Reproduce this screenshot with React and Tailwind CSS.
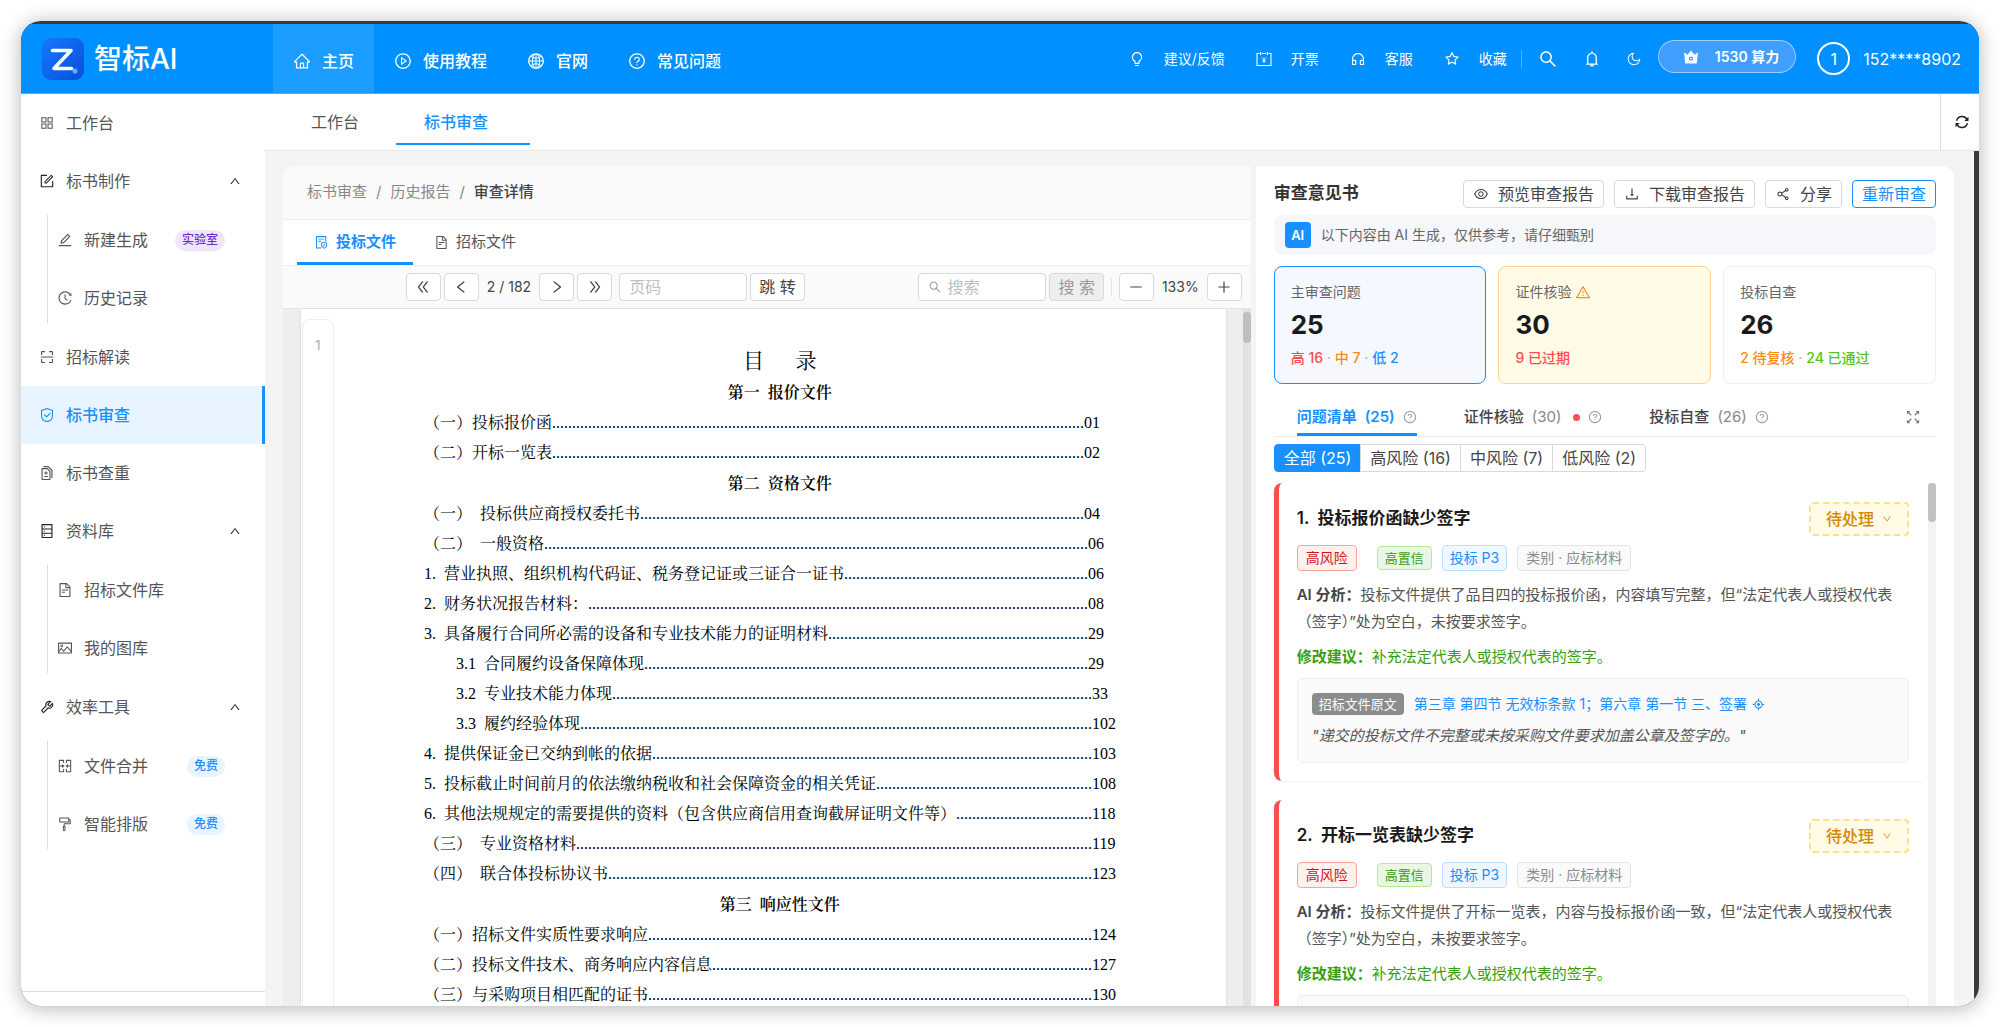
import React, { useState } from 'react';
import {
  AiOutlineAim,
  AiOutlineAppstore,
  AiOutlineBell,
  AiOutlineBulb,
  AiOutlineCustomerService,
  AiOutlineDatabase,
  AiOutlineDiff,
  AiOutlineDoubleLeft,
  AiOutlineDoubleRight,
  AiOutlineDown,
  AiOutlineDownload,
  AiOutlineEdit,
  AiOutlineEye,
  AiOutlineFileProtect,
  AiOutlineFileText,
  AiOutlineForm,
  AiOutlineFormatPainter,
  AiOutlineGlobal,
  AiOutlineHistory,
  AiOutlineHome,
  AiOutlineLeft,
  AiOutlineMergeCells,
  AiOutlineMinus,
  AiOutlineMoon,
  AiOutlinePicture,
  AiOutlinePlayCircle,
  AiOutlinePlus,
  AiOutlineQuestionCircle,
  AiOutlineRight,
  AiOutlineSafety,
  AiOutlineScan,
  AiOutlineSearch,
  AiOutlineShareAlt,
  AiOutlineStar,
  AiOutlineTool,
  AiOutlineUp,
  AiOutlineWarning,
} from 'react-icons/ai';

const InvoiceIcon = ({ className }) => (
  <svg viewBox="0 0 16 16" className={className} fill="none" stroke="currentColor" strokeWidth="1.1">
    <path d="M3.5 2.5H1v12h14v-12h-2.5M5.8 2.5h4.4M4.6 1v3M11.4 1v3" />
    <path d="M6.2 6.2L8 8.8l1.8-2.6M8 8.8v3M6.6 9h2.8M6.6 10.5h2.8" strokeWidth="0.9" />
  </svg>
);

const CrownIcon = ({ className }) => (
  <svg viewBox="0 0 16 16" className={className} fill="currentColor" fillRule="evenodd">
    <path d="M1 3.5l3.6 2.2L8 1.5l3.4 4.2L15 3.5 13.7 14.5H2.3zM8 7.4a2.2 2.2 0 100 4.4 2.2 2.2 0 000-4.4zm0 1.3a.9.9 0 110 1.8.9.9 0 010-1.8z" />
  </svg>
);

const RefreshIcon = ({ className }) => (
  <svg viewBox="0 0 16 16" className={className} fill="none" stroke="currentColor" strokeWidth="1.6">
    <path d="M1.8 6.6A6.4 6.4 0 0113.6 5M14.2 9.4A6.4 6.4 0 012.4 11" />
    <path d="M15.4 2v4.8h-4.8zM.6 14V9.2h4.8z" fill="currentColor" stroke="none" />
  </svg>
);

const ExpandIcon = ({ className }) => (
  <svg viewBox="0 0 16 16" className={className} fill="none" stroke="currentColor" strokeWidth="1.3">
    <path d="M2 2l4 4M14 2l-4 4M2 14l4-4M14 14l-4-4" />
    <path d="M1 5V1h4zM11 1h4v4zM1 11v4h4zM11 15h4v-4z" fill="currentColor" stroke="none" />
  </svg>
);

const LogoMark = () => (
  <svg viewBox="0 0 42 42" className="w-[42px] h-[42px]">
    <defs>
      <linearGradient id="logo" x1="0" y1="0" x2="1" y2="1">
        <stop offset="0" stopColor="#1677ff" />
        <stop offset="1" stopColor="#0a4fd8" />
      </linearGradient>
    </defs>
    <rect width="42" height="42" rx="9" fill="url(#logo)" />
    <path d="M10.5 12.5H29L12 30.5h17.5" fill="none" stroke="#fff" strokeWidth="3.6" strokeLinecap="round" strokeLinejoin="round" />
    <circle cx="33" cy="33" r="2.5" fill="#5eb0ff" />
  </svg>
);

const mainNav = [
  { label: '主页', icon: AiOutlineHome, active: true },
  { label: '使用教程', icon: AiOutlinePlayCircle },
  { label: '官网', icon: AiOutlineGlobal },
  { label: '常见问题', icon: AiOutlineQuestionCircle },
];

const quickLinks = [
  { label: '建议/反馈', icon: AiOutlineBulb },
  { label: '开票', icon: InvoiceIcon },
  { label: '客服', icon: AiOutlineCustomerService },
  { label: '收藏', icon: AiOutlineStar },
];

const menu = [
  { label: '工作台', icon: AiOutlineAppstore },
  {
    label: '标书制作',
    icon: AiOutlineForm,
    children: [
      { label: '新建生成', icon: AiOutlineEdit, badge: '实验室', badgeClass: 'bg-[#efe6fb] text-[#722ed1]' },
      { label: '历史记录', icon: AiOutlineHistory },
    ],
  },
  { label: '招标解读', icon: AiOutlineScan },
  { label: '标书审查', icon: AiOutlineSafety, active: true },
  { label: '标书查重', icon: AiOutlineDiff },
  {
    label: '资料库',
    icon: AiOutlineDatabase,
    children: [
      { label: '招标文件库', icon: AiOutlineFileText },
      { label: '我的图库', icon: AiOutlinePicture },
    ],
  },
  {
    label: '效率工具',
    icon: AiOutlineTool,
    children: [
      { label: '文件合并', icon: AiOutlineMergeCells, badge: '免费', badgeClass: 'bg-[#e8f4ff] text-[#1890ff]' },
      { label: '智能排版', icon: AiOutlineFormatPainter, badge: '免费', badgeClass: 'bg-[#e8f4ff] text-[#1890ff]' },
    ],
  },
];

// Table of contents of the open bid document, dots = length of the leader
const toc = [
  { heading: '第一  报价文件' },
  { text: '（一）投标报价函', dots: 133, page: '01' },
  { text: '（二）开标一览表', dots: 133, page: '02' },
  { heading: '第二  资格文件' },
  { text: '（一）  投标供应商授权委托书', dots: 111, page: '04' },
  { text: '（二）  一般资格', dots: 136, page: '06' },
  { text: '1.  营业执照、组织机构代码证、税务登记证或三证合一证书', dots: 61, page: '06' },
  { text: '2.  财务状况报告材料：', dots: 125, page: '08' },
  { text: '3.  具备履行合同所必需的设备和专业技术能力的证明材料', dots: 65, page: '29' },
  { text: '3.1  合同履约设备保障体现', dots: 111, page: '29', nested: true },
  { text: '3.2  专业技术能力体现', dots: 120, page: '33', nested: true },
  { text: '3.3  履约经验体现', dots: 128, page: '102', nested: true },
  { text: '4.  提供保证金已交纳到帐的依据', dots: 110, page: '103' },
  { text: '5.  投标截止时间前月的依法缴纳税收和社会保障资金的相关凭证', dots: 54, page: '108' },
  { text: '6.  其他法规规定的需要提供的资料（包含供应商信用查询截屏证明文件等）', dots: 34, page: '118' },
  { text: '（三）  专业资格材料', dots: 129, page: '119' },
  { text: '（四）  联合体投标协议书', dots: 121, page: '123' },
  { heading: '第三  响应性文件' },
  { text: '（一）招标文件实质性要求响应', dots: 111, page: '124' },
  { text: '（二）投标文件技术、商务响应内容信息', dots: 95, page: '127' },
  { text: '（三）与采购项目相匹配的证书', dots: 111, page: '130' },
];

const filters = ['全部 (25)', '高风险 (16)', '中风险 (7)', '低风险 (2)'];

const issues = [
  {
    id: 1,
    title: '投标报价函缺少签字',
    analysis: '投标文件提供了品目四的投标报价函，内容填写完整，但“法定代表人或授权代表（签字）”处为空白，未按要求签字。',
  },
  {
    id: 2,
    title: '开标一览表缺少签字',
    analysis: '投标文件提供了开标一览表，内容与投标报价函一致，但“法定代表人或授权代表（签字）”处为空白，未按要求签字。',
  },
];

const Header = () => (
  <header className="h-[70px] shrink-0 bg-[#0090ff] border-b border-[#47afff] flex text-white">
    <div className="w-[252px] pl-[21px] flex items-center gap-2.5 shrink-0">
      <LogoMark />
      <span className="text-[28px] font-medium leading-8">智标AI</span>
    </div>
    <nav className="flex">
      {mainNav.map(({ label, icon: Icon, active }) => (
        <a
          key={label}
          href="#"
          className={`flex items-center gap-[11px] px-5 pt-1 text-base font-medium whitespace-nowrap ${active ? 'bg-[#1a9dff]' : ''}`}
        >
          <Icon className="w-[18px] h-[18px]" />
          {label}
        </a>
      ))}
    </nav>
    <div className="ml-auto pr-[18px] flex items-center">
      <div className="flex items-center gap-[31px] pr-3.5 mr-4 border-r border-white/30 h-[18px]">
        {quickLinks.map(({ label, icon: Icon }) => (
          <a key={label} href="#" className="flex items-center gap-[19px] text-sm whitespace-nowrap">
            <Icon className="w-4 h-4" />
            {label}
          </a>
        ))}
      </div>
      <div className="flex items-center gap-[25px]">
        <button aria-label="搜索"><AiOutlineSearch className="w-5 h-5" /></button>
        <button aria-label="通知"><AiOutlineBell className="w-[18px] h-[18px]" /></button>
        <button aria-label="深色模式"><AiOutlineMoon className="w-4 h-4" /></button>
      </div>
      <button className="ml-4 mb-1 h-[33px] pl-6 pr-4 rounded-full border border-white/50 bg-[#409eff] flex items-center gap-4 text-sm font-semibold whitespace-nowrap">
        <CrownIcon className="w-4 h-4" />
        1530 算力
      </button>
      <a href="#" className="ml-[21px] flex items-center gap-[13px] text-base">
        <span className="w-[33px] h-[33px] rounded-full border-2 border-white flex items-center justify-center">1</span>
        152****8902
      </a>
    </div>
  </header>
);

const MenuItem = ({ item, nested }) => {
  const Icon = item.icon;
  return (
    <a
      href="#"
      className={`h-[58px] pr-6 flex items-center text-base ${nested ? 'pl-9' : 'pl-[18px]'} ${
        item.active ? 'bg-[#e8f4ff] text-[#1890ff] font-medium border-r-3 border-[#1890ff]' : 'text-[#555]'
      }`}
    >
      <Icon className={`w-4 h-4 mr-[11px] ${item.children ? 'text-[#222]' : ''}`} />
      {item.label}
      {item.badge && (
        <span className={`ml-auto mr-4 h-[21px] px-[7px] rounded-full text-xs font-medium flex items-center ${item.badgeClass}`}>
          {item.badge}
        </span>
      )}
      {item.children && <AiOutlineUp className="w-3 h-3 ml-auto text-[#222]" />}
    </a>
  );
};

const Sidebar = () => (
  <aside className="w-[244px] shrink-0 bg-white flex flex-col justify-between overflow-hidden">
    <nav>
      {menu.map((item) => (
        <div key={item.label}>
          <MenuItem item={item} />
          {item.children && (
            <div className="py-px relative before:absolute before:left-[26px] before:top-[5px] before:bottom-[5px] before:w-px before:bg-[#ddd]">
              {item.children.map((child) => (
                <MenuItem key={child.label} item={child} nested />
              ))}
            </div>
          )}
        </div>
      ))}
    </nav>
    <div className="h-[15px] border-t border-[#ddd] shrink-0" />
  </aside>
);

const ToolButton = ({ label, children }) => (
  <button
    aria-label={label}
    className="w-[35px] h-7 rounded border border-[#d9d9d9] bg-white flex items-center justify-center text-[#444] shrink-0"
  >
    {children}
  </button>
);

const DocumentPanel = () => (
  <section className="min-w-0 bg-white rounded-tl-xl overflow-hidden flex flex-col">
    <div className="h-[54px] shrink-0 px-6 bg-[#fafafa] border-b border-[#eee] flex items-center gap-[9px] text-[15px] text-[#888]">
      <a href="#">标书审查</a>
      <span>/</span>
      <a href="#">历史报告</a>
      <span>/</span>
      <span className="text-[#444] font-medium">审查详情</span>
    </div>
    <div className="h-[46px] shrink-0 px-3.5 flex gap-1 border-b border-[#eee] text-[15px]">
      <button className="px-[17px] pt-[3px] flex items-center gap-[7px] text-[#1890ff] font-semibold border-b-3 border-[#1890ff]">
        <AiOutlineFileProtect />
        投标文件
      </button>
      <button className="px-[17px] pt-[3px] flex items-center gap-[7px] text-[#555] border-b-3 border-transparent">
        <AiOutlineFileText />
        招标文件
      </button>
    </div>
    <div className="h-[43px] shrink-0 px-[9px] bg-[#fafafa] border-b border-[#e4e4e4] flex items-center text-[#444]">
      <div className="flex-1 flex items-center justify-center gap-[3px] text-sm">
        <ToolButton label="第一页"><AiOutlineDoubleLeft className="w-4 h-4" /></ToolButton>
        <ToolButton label="上一页"><AiOutlineLeft className="w-4 h-4" /></ToolButton>
        <span className="px-[5px] whitespace-nowrap">2 / 182</span>
        <ToolButton label="下一页"><AiOutlineRight className="w-4 h-4" /></ToolButton>
        <ToolButton label="最后一页"><AiOutlineDoubleRight className="w-4 h-4" /></ToolButton>
        <input
          aria-label="页码"
          placeholder="页码"
          className="w-32 h-7 ml-1 px-[9px] rounded border border-[#d9d9d9] bg-white text-base placeholder:text-[#bfbfbf]"
        />
        <button className="h-7 px-2 rounded border border-[#d9d9d9] bg-white text-base whitespace-nowrap">跳 转</button>
      </div>
      <div className="flex items-center gap-[3px]">
        <label className="w-32 h-7 px-[9px] rounded border border-[#d9d9d9] bg-white flex items-center gap-[5px]">
          <AiOutlineSearch className="w-3.5 h-3.5 text-[#999] shrink-0" />
          <input aria-label="搜索内容" placeholder="搜索" className="w-full text-base placeholder:text-[#bfbfbf] outline-none" />
        </label>
        <button disabled className="h-7 px-2 rounded border border-[#d9d9d9] bg-[#eee] text-base text-[#999] whitespace-nowrap">搜 索</button>
      </div>
      <div className="ml-[7px] h-[18px] border-l border-[#e4e4e4] pl-[7px] flex items-center gap-2 text-sm">
        <ToolButton label="缩小"><AiOutlineMinus className="w-4 h-4" /></ToolButton>
        133%
        <ToolButton label="放大"><AiOutlinePlus className="w-4 h-4" /></ToolButton>
      </div>
    </div>
    <div className="flex-1 min-h-0 flex bg-[#eee]">
      <div className="flex-1 min-w-0 ml-[18px] mr-[17px] bg-white shadow flex overflow-hidden">
        <div className="w-8 shrink-0 ml-px mt-2.5 pt-[15px] rounded-t-lg border border-b-0 border-[#eee] text-center text-[13px] leading-5 text-[#aaa]">
          1
        </div>
        <div className="flex-1 min-w-0 px-22 pt-9 font-['Liberation_Serif','Noto_Serif_CJK_SC','Noto_Sans_CJK_SC',serif] text-base text-black">
          <h2 className="h-8 text-center text-[21px] leading-8 whitespace-pre">目      录</h2>
          {toc.map((row) =>
            row.heading ? (
              <h3 key={row.heading} className="h-[31px] text-center leading-[31px] font-semibold whitespace-pre">{row.heading}</h3>
            ) : (
              <p key={row.text} className={`h-[30px] leading-[30px] whitespace-pre ${row.nested ? 'pl-[34px]' : 'pl-0.5'}`}>
                {row.text}{'.'.repeat(row.dots)}{row.page}
              </p>
            )
          )}
        </div>
      </div>
      <div className="w-2 shrink-0 pt-[3px] bg-[#e2e2e2]">
        <div className="h-[31px] rounded-sm bg-[#bfbfbf]" />
      </div>
    </div>
  </section>
);

const ActionButton = ({ icon: Icon, children }) => (
  <button className="h-7 px-[9px] rounded border border-[#d9d9d9] bg-white flex items-center gap-[9px] text-base text-[#444] whitespace-nowrap">
    <Icon className="w-4 h-4" />
    {children}
  </button>
);

const SummaryCard = ({ label, count, className, icon, children }) => (
  <div className={`px-4 py-3.5 rounded-lg border text-sm ${className}`}>
    <div className="leading-[22px] text-[#666] flex items-center gap-1">
      {label}
      {icon}
    </div>
    <div className="mt-1 text-[26px] leading-9 font-bold text-[#1a1a1a]">{count}</div>
    <div className="mt-1 leading-[22px] font-medium whitespace-nowrap">{children}</div>
  </div>
);

const Dot = () => <span className="text-[#bbb]"> · </span>;

const IssueCard = ({ issue }) => (
  <article className="pl-[18px] pr-[18px] pt-[19px] pb-[18px] rounded-lg border-l-5 border-[#ff4d4f] bg-white shadow-[0_1px_2px_rgba(0,0,0,0.05)]">
    <div className="h-[34px] flex items-center justify-between">
      <h3 className="text-[17px] font-semibold text-[#1a1a1a] whitespace-pre">{issue.id}.  {issue.title}</h3>
      <button className="h-[34px] px-[15px] rounded border-2 border-dashed border-[#ffe08a] bg-[#fffbe6] text-[#d48806] text-base font-medium flex items-center gap-2">
        待处理
        <AiOutlineDown className="w-2.5 h-2.5" />
      </button>
    </div>
    <div className="mt-[9px] h-[26px] flex items-center text-sm whitespace-nowrap">
      <span className="h-[26px] px-2 mr-5 rounded border border-[#ffa39e] bg-[#fff1f0] text-[#cf1322] flex items-center">高风险</span>
      <span className="h-6 px-[7px] mr-2.5 rounded border border-[#b7eb8f] bg-[#eaf7e4] text-[#389e0d] text-[13px] flex items-center">高置信</span>
      <a href="#" className="h-[26px] px-[7px] mr-2.5 rounded border border-[#bfdfff] bg-[#f0f7ff] text-[#1890ff] flex items-center">投标 P3</a>
      <span className="h-[26px] px-2 rounded border border-[#e4e4e4] bg-[#fafafa] text-[#8c8c8c] flex items-center">类别 · 应标材料</span>
    </div>
    <p className="mt-2.5 text-[15px] leading-[27px] text-[#555]">
      <b className="font-semibold text-[#444]">AI 分析：</b>
      {issue.analysis}
    </p>
    <p className="mt-2 text-[15px] leading-[27px] text-[#389e0d]">
      <b className="font-semibold">修改建议：</b>
      补充法定代表人或授权代表的签字。
    </p>
    <div className="mt-2 px-3.5 py-[13px] rounded-md border border-[#eee] bg-[#fafafa]">
      <div className="h-6 flex items-center text-sm whitespace-nowrap">
        <span className="h-[22px] px-[7px] mr-2.5 rounded-sm bg-[#8c8c8c] text-white text-[13px] flex items-center">招标文件原文</span>
        <a href="#" className="text-[#1890ff] flex items-center gap-[5px]">
          第三章 第四节 无效标条款 1；第六章 第一节 三、签署
          <AiOutlineAim className="w-[13px] h-[13px]" />
        </a>
      </div>
      <blockquote className="mt-1.5 text-[15px] leading-[27px] italic text-[#555]">
        "递交的投标文件不完整或未按采购文件要求加盖公章及签字的。"
      </blockquote>
    </div>
  </article>
);

const ReviewPanel = () => {
  const [filter, setFilter] = useState(filters[0]);

  return (
    <section className="min-w-0 px-[18px] pt-3.5 bg-white rounded-tr-xl flex flex-col overflow-hidden">
      <div className="h-7 shrink-0 flex items-center gap-2.5">
        <h2 className="mr-auto text-[17px] font-semibold text-[#333] whitespace-nowrap">审查意见书</h2>
        <ActionButton icon={AiOutlineEye}>预览审查报告</ActionButton>
        <ActionButton icon={AiOutlineDownload}>下载审查报告</ActionButton>
        <ActionButton icon={AiOutlineShareAlt}>分享</ActionButton>
        <button className="h-7 px-[9px] rounded border border-[#1890ff] text-base text-[#1890ff] whitespace-nowrap">重新审查</button>
      </div>
      <div className="mt-[7px] h-10 shrink-0 px-[11px] rounded-lg bg-[#f5f7fa] flex items-center gap-2.5 text-sm text-[#666]">
        <span className="w-[26px] h-[26px] rounded bg-[#1890ff] text-white text-[13px] font-semibold flex items-center justify-center">AI</span>
        以下内容由 AI 生成，仅供参考，请仔细甄别
      </div>

      <div className="mt-[11px] shrink-0 grid grid-cols-3 gap-3">
        <SummaryCard label="主审查问题" count="25" className="border-[#1890ff] bg-[#f5f9ff]">
          <span className="text-[#ff4d4f]">高 16</span><Dot />
          <span className="text-[#fa8c16]">中 7</span><Dot />
          <span className="text-[#1890ff]">低 2</span>
        </SummaryCard>
        <SummaryCard
          label="证件核验"
          count="30"
          className="border-[#ffd591] bg-[#fffbe6]"
          icon={<AiOutlineWarning className="w-4 h-4 text-[#fa8c16]" />}
        >
          <span className="text-[#ff4d4f]">9 已过期</span>
        </SummaryCard>
        <SummaryCard label="投标自查" count="26" className="border-[#f0f0f0] bg-white">
          <span className="text-[#fa8c16]">2 待复核</span><Dot />
          <span className="text-[#52c41a]">24 已通过</span>
        </SummaryCard>
      </div>

      <div className="mt-[14px] h-[39px] shrink-0 pl-[23px] pr-4 flex items-stretch gap-[47px] border-b border-[#eee] text-[15px] whitespace-nowrap">
        <button className="pt-[3px] flex items-center gap-2 font-semibold text-[#1890ff] border-b-3 border-[#1890ff]">
          问题清单 <span>(25)</span>
          <AiOutlineQuestionCircle className="w-3.5 h-3.5 text-[#999]" />
        </button>
        <button className="pt-[3px] flex items-center gap-2 font-medium text-[#444] border-b-3 border-transparent">
          证件核验 <span className="font-normal text-[#888]">(30)</span>
          <span className="w-[7px] h-[7px] ml-1 rounded-full bg-[#ff4d4f]" />
          <AiOutlineQuestionCircle className="w-3.5 h-3.5 text-[#999]" />
        </button>
        <button className="pt-[3px] flex items-center gap-2 font-medium text-[#444] border-b-3 border-transparent">
          投标自查 <span className="font-normal text-[#888]">(26)</span>
          <AiOutlineQuestionCircle className="w-3.5 h-3.5 text-[#999]" />
        </button>
        <button aria-label="展开" className="ml-auto text-[#777]">
          <ExpandIcon className="w-3.5 h-3.5" />
        </button>
      </div>

      <div className="mt-[7px] h-7 shrink-0 flex text-base whitespace-nowrap">
        {filters.map((name) => (
          <button
            key={name}
            onClick={() => setFilter(name)}
            className={`px-[9px] border -ml-px first:ml-0 first:rounded-l last:rounded-r ${
              filter === name ? 'bg-[#1890ff] border-[#1890ff] text-white' : 'bg-white border-[#d9d9d9] text-[#444]'
            }`}
          >
            {name}
          </button>
        ))}
      </div>

      <div className="mt-[11px] flex-1 min-h-0 flex">
        <div className="flex-1 min-w-0 overflow-hidden flex flex-col gap-[19px] *:shrink-0">
          {issues.map((issue) => (
            <IssueCard key={issue.id} issue={issue} />
          ))}
        </div>
        <div className="w-2 shrink-0 ml-px bg-[#f3f3f3]">
          <div className="h-[39px] rounded-sm bg-[#c1c1c1]" />
        </div>
      </div>
    </section>
  );
};

const App = () => (
  <div className="h-screen p-[21px] bg-white font-[Inter,'Noto_Sans_CJK_SC',sans-serif]">
    <div lang="zh-CN" className="h-full pt-[3px] rounded-[20px] overflow-hidden bg-[#3a3a3a] shadow-[0_2px_20px_rgba(0,0,0,0.3)] flex flex-col">
      <Header />
      <div className="flex-1 min-h-0 flex">
        <Sidebar />
        <main className="flex-1 min-w-0 flex flex-col">
          <div className="h-[57px] shrink-0 pl-[18px] bg-white border-b border-[#e8e8e8] flex text-base text-[#555]">
            <a href="#" className="w-[113px] pl-7 flex items-center">工作台</a>
            <div className="w-[134px] pb-[5px] flex">
              <a href="#" className="flex-1 pl-7 pt-1.5 flex items-center text-[#1890ff] font-medium border-b-2 border-[#1890ff]">标书审查</a>
            </div>
            <button aria-label="刷新" className="ml-auto w-[39px] pl-1 border-l border-[#ddd] flex items-center justify-center text-[#222]">
              <RefreshIcon className="w-3.5 h-3.5" />
            </button>
          </div>
          <div className="flex-1 min-h-0 mr-[5px] pl-[18px] pr-5 pt-[15px] bg-[#f4f4f4] grid grid-cols-[97fr_70fr] grid-rows-1 gap-[5px]">
            <DocumentPanel />
            <ReviewPanel />
          </div>
        </main>
      </div>
    </div>
  </div>
);

export default App;
